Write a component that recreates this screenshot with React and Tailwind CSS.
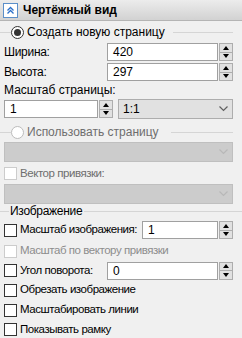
import React from "react";

const font = { fontFamily: '"Liberation Sans", Arial, sans-serif' };

const Spinner = () => (
  <div className="flex flex-col w-[14px] h-[18px] ml-[1px]">
    <div className="flex-1 flex items-center justify-center bg-[#e1e1e1] border border-[#adadad]">
      <div className="w-0 h-0 border-l-[3px] border-r-[3px] border-b-[4px] border-l-transparent border-r-transparent border-b-black" />
    </div>
    <div className="flex-1 flex items-center justify-center bg-[#e1e1e1] border border-t-0 border-[#adadad]">
      <div className="w-0 h-0 border-l-[3px] border-r-[3px] border-t-[4px] border-l-transparent border-r-transparent border-t-black" />
    </div>
  </div>
);

const NumInput = ({ value, className }) => (
  <div className={"flex items-center shrink-0 " + className}>
    <div className="flex-1 h-[18px] bg-white border border-[#a0a0a0] flex items-center pl-[5px] text-[12px] text-black">
      {value}
    </div>
    <Spinner />
  </div>
);

const Chevron = ({ color }) => (
  <svg width="9" height="6" viewBox="0 0 9 6">
    <path d="M0.5 0.5 L4.5 4.5 L8.5 0.5" fill="none" stroke={color} strokeWidth="1.2" />
  </svg>
);

const Select = ({ value, disabled, className }) => (
  <div
    className={
      "h-[20px] flex items-center justify-between px-[4px] border " +
      (disabled ? "bg-[#cccccc] border-[#bfbfbf]" : "bg-[#e1e1e1] border-[#adadad]") +
      " " +
      className
    }
  >
    <span className="text-[12px] text-black">{value}</span>
    <Chevron color={disabled ? "#b8b8b8" : "#606060"} />
  </div>
);

const Radio = ({ checked, disabled }) => (
  <div
    className={
      "w-[13px] h-[13px] rounded-full bg-white border flex items-center justify-center " +
      (disabled ? "border-[#bcbcbc]" : "border-[#333333]")
    }
  >
    {checked && <div className="w-[7px] h-[7px] rounded-full bg-[#333333]" />}
  </div>
);

const Check = ({ disabled }) => (
  <div
    className={
      "w-[13px] h-[13px] bg-white border shrink-0 " +
      (disabled ? "border-[#cccccc]" : "border-[#333333]")
    }
  />
);

const CheckRow = ({ label, disabled, muted, children, className }) => (
  <div className={"flex items-center " + (className || "h-[20px]")}>
    <Check disabled={disabled} />
    <span
      className={
        "ml-[3px] text-[11.5px] tracking-[-0.45px] whitespace-nowrap " +
        (muted ? "text-[#8d8d8d]" : disabled ? "text-[#6e6e6e]" : "text-black")
      }
    >
      {label}
    </span>
    {children}
  </div>
);

export default function App() {
  return (
    <div className="w-[242px] h-[338px] bg-[#f0f0f0] overflow-hidden" style={font}>
      {/* Title bar */}
      <div className="h-[21px] flex items-center bg-gradient-to-b from-[#ececec] to-[#d2d2d2] border-b border-[#b4b4b4]">
        <div className="ml-[3px] w-[15px] h-[15px] bg-white border border-[#5b8fc9] flex items-center justify-center">
          <svg width="9" height="9" viewBox="0 0 9 9">
            <path d="M1.5 4.5 L4.5 1.5 L7.5 4.5 M1.5 7.5 L4.5 4.5 L7.5 7.5" fill="none" stroke="#2a6fc9" strokeWidth="1.3" />
          </svg>
        </div>
        <span className="ml-[5px] text-[12px] font-bold text-black">Чертёжный вид</span>
      </div>

      <div className="px-[4px]">
        {/* Create new page group */}
        <div className="flex items-center h-[18px] mt-[2px] -ml-[4px]">
          <div className="w-[11px] h-px bg-[#d5d5d5]" />
          <Radio checked />
          <span className="ml-[3px] text-[12px] text-black">Создать новую страницу</span>
          <div className="flex-1 h-px bg-[#d5d5d5] ml-[8px] mr-[5px]" />
        </div>

        <div className="flex items-center h-[20px] mt-[1px]">
          <span className="w-[103px] text-[12px] tracking-[-0.3px] text-black">Ширина:</span>
          <NumInput value="420" className="flex-1 mr-[5px]" />
        </div>
        <div className="flex items-center h-[20px]">
          <span className="w-[103px] text-[12px] tracking-[-0.3px] text-black">Высота:</span>
          <NumInput value="297" className="flex-1 mr-[5px]" />
        </div>
        <div className="h-[16px] flex items-center text-[12px] text-black">Масштаб страницы:</div>
        <div className="flex items-center h-[22px]">
          <NumInput value="1" className="w-[109px]" />
          <Select value="1:1" className="flex-1 ml-[5px] mr-[5px]" />
        </div>

        {/* Use page group */}
        <div className="flex items-center h-[18px] mt-[3px] -ml-[4px]">
          <div className="w-[11px] h-px bg-[#d5d5d5]" />
          <Radio disabled />
          <span className="ml-[3px] text-[12px] text-[#6e6e6e]">Использовать страницу</span>
          <div className="flex-1 h-px bg-[#d5d5d5] ml-[12px] mr-[5px]" />
        </div>
        <Select disabled value="" className="mr-[5px] mt-[1px]" />
        <CheckRow label="Вектор привязки:" disabled className="h-[19px] mt-[2px]" />
        <Select disabled value="" className="mr-[5px] mt-[1px]" />

        {/* Image group */}
        <div className="flex items-center h-[14px] -ml-[4px] -mr-[4px]">
          <div className="w-[9px] h-px bg-[#d5d5d5]" />
          <span className="ml-[1px] text-[12px] tracking-[-0.3px] text-black">Изображение</span>
          <div className="flex-1 h-px bg-[#d5d5d5] ml-[2px]" />
        </div>
        <CheckRow label="Масштаб изображения:" className="h-[22px] mt-[1px]">
          <NumInput value="1" className="w-[91px] ml-auto mr-[5px]" />
        </CheckRow>
        <CheckRow label="Масштаб по вектору привязки" disabled muted />
        <CheckRow label="Угол поворота:" className="h-[19px]">
          <NumInput value="0" className="w-[126px] ml-auto mr-[5px]" />
        </CheckRow>
        <CheckRow label="Обрезать изображение" />
        <CheckRow label="Масштабировать линии" />
        <CheckRow label="Показывать рамку" className="h-[19px]" />
      </div>
    </div>
  );
}
